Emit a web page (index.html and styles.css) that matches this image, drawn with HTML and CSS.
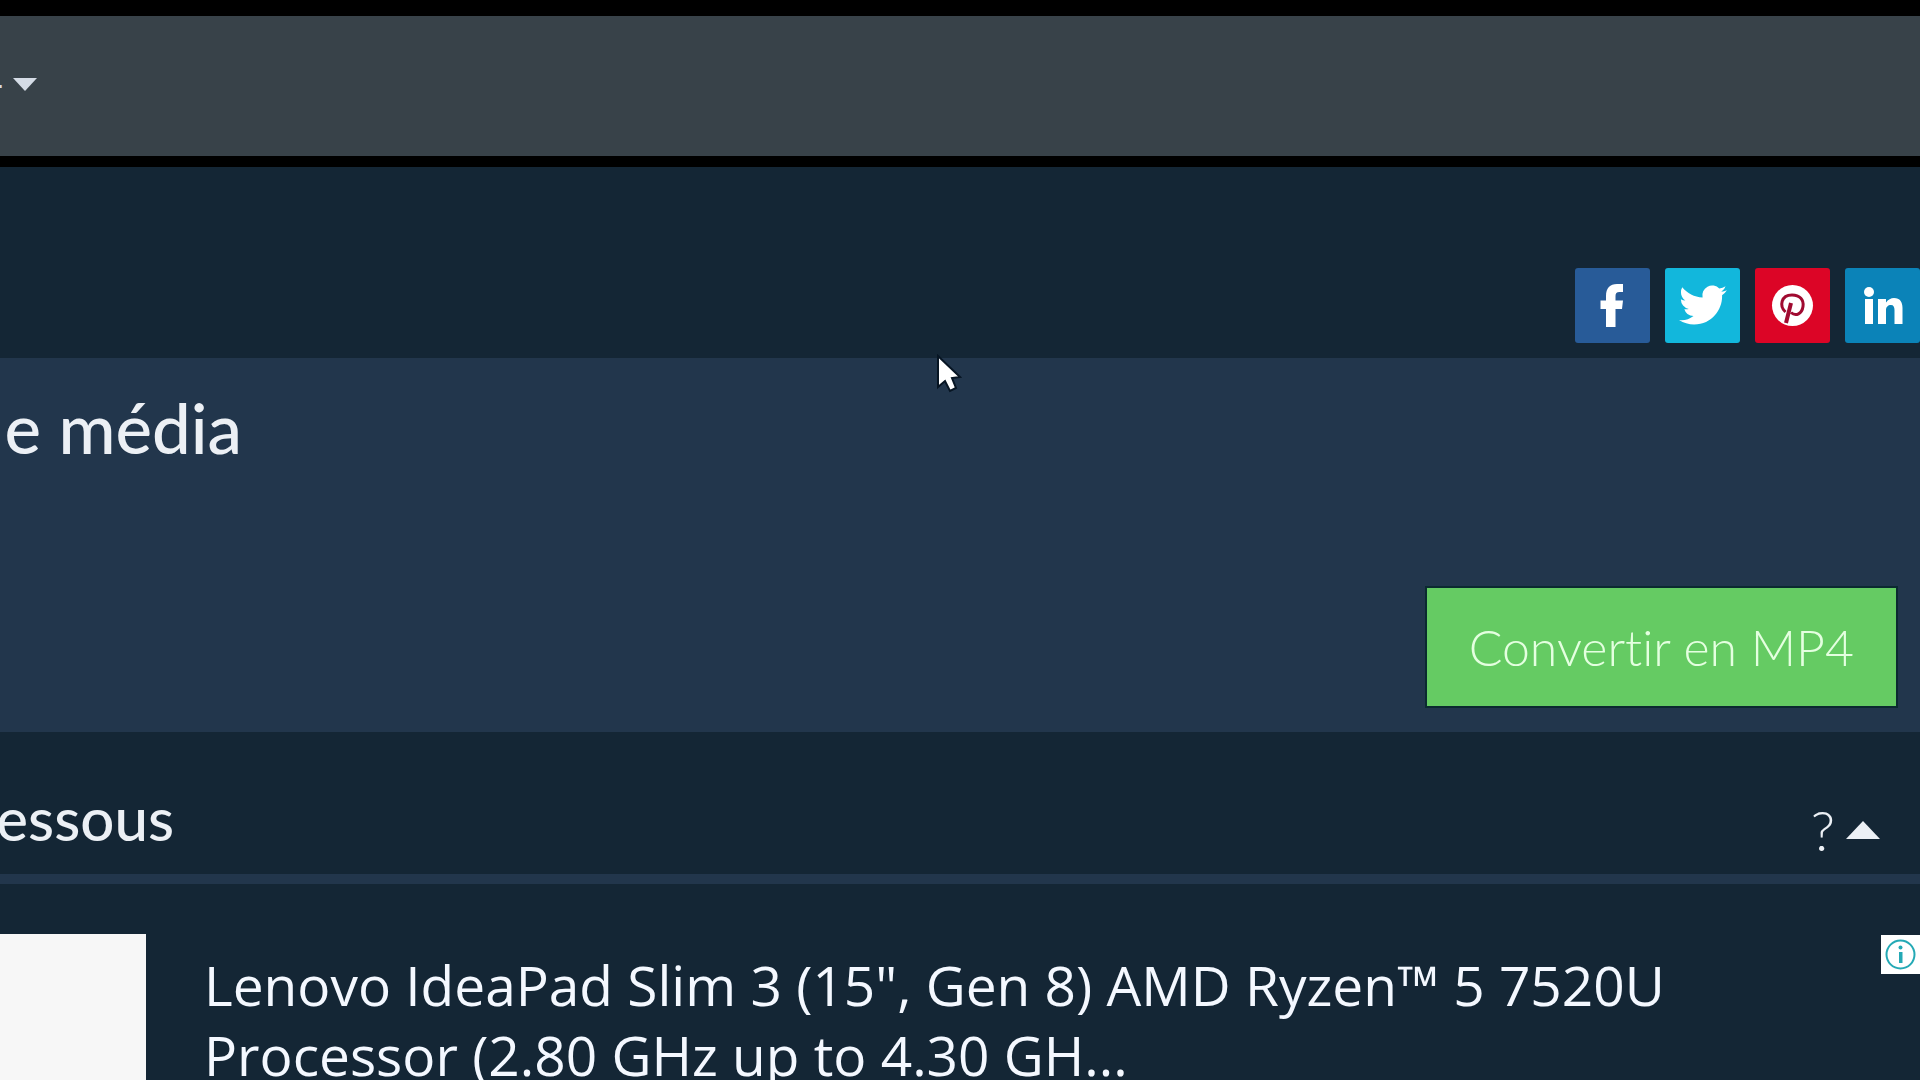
FILE: index.html
```
<!DOCTYPE html>
<html lang="fr">
<head>
    <meta charset="UTF-8">
    <meta name="viewport" content="width=device-width, initial-scale=1.0">
    <title>Convertir en MP4</title>
    <link rel="stylesheet" href="styles.css">
</head>
<body>
    <header class="topbar">
        <button class="topbar__menu" aria-label="Menu">
            <span class="topbar__label">-</span>
            <span class="caret caret--down"></span>
        </button>
    </header>

    <nav class="share" aria-label="Partager">
        <a class="share__link share__link--facebook" href="#" aria-label="Facebook">
            <svg viewBox="0 0 75 75">
                <path d="M31 59V41H25.500V32.500H31V28C31 20 35 16 42 16H48V24H44.500C41.500 24 40.500 25.500 40.500 28V32.500H48L47 41H40.500V59Z" />
            </svg>
        </a>
        <a class="share__link share__link--twitter" href="#" aria-label="Twitter">
            <svg viewBox="0 0 75 75">
                <path transform="translate(14 13) scale(2)" d="M23.950 4.570a10 10 0 0 1-2.820.77 4.960 4.960 0 0 0 2.160-2.720c-.95.55-2 .96-3.130 1.180a4.920 4.920 0 0 0-8.380 4.480C7.690 8.090 4.070 6.130 1.640 3.160a4.820 4.820 0 0 0-.67 2.480c0 1.710.87 3.210 2.190 4.100a4.900 4.900 0 0 1-2.230-.62v.06a4.920 4.920 0 0 0 3.950 4.830 5 5 0 0 1-2.210.08 4.940 4.940 0 0 0 4.600 3.420A9.870 9.870 0 0 1 0 19.540a13.990 13.990 0 0 0 7.550 2.210c9.050 0 14-7.500 14-13.980 0-.21 0-.42-.02-.63a9.940 9.940 0 0 0 2.420-2.570z" />
            </svg>
        </a>
        <a class="share__link share__link--pinterest" href="#" aria-label="Pinterest">
            <svg viewBox="0 0 75 75">
                <circle cx="37.500" cy="37.500" r="20.500" />
                <path class="share__stroke" d="M30.500 44C24 38 26 27 37 27C45 27 49 32 48 38.500C47 45.500 41 49 36 44.500" />
                <path class="share__stem" d="M36 35L31 55" />
            </svg>
        </a>
        <a class="share__link share__link--linkedin" href="#" aria-label="LinkedIn">
            <svg viewBox="0 0 75 75">
                <circle cx="24" cy="24" r="5" />
                <path d="M20 31H28V56H20ZM33 31H41V34.500C43 31.500 46 30 49 30C55 30 57.500 34 57.500 40V56H49.500V42C49.500 39 48.500 37 46 37C43 37 41 39 41 42V56H33Z" />
            </svg>
        </a>
    </nav>

    <main>
        <section class="panel">
            <h1 class="panel__title">de média</h1>
            <button class="btn">Convertir en MP4</button>
        </section>

        <section class="step">
            <h2 class="step__title">essous</h2>
            <button class="step__help">? <span class="caret caret--up"></span></button>
        </section>

        <section class="ad">
            <div class="ad__image"></div>
            <a class="ad__text" href="#">Lenovo IdeaPad Slim 3 (15", Gen 8) AMD Ryzen™ 5 7520U Processor (2.80 GHz up to 4.30 GH...</a>
            <button class="ad__info" aria-label="Informations">
                <svg viewBox="0 0 39 39">
                    <circle class="ad__ring" cx="19.500" cy="19.500" r="14" />
                    <circle cx="19.500" cy="12.500" r="2" />
                    <path d="M18 17H21.500V28H18Z" />
                </svg>
            </button>
        </section>
    </main>

    <svg class="cursor" viewBox="0 0 26 40">
        <path d="M2 2V33L9 27L14 37L20 34L16 24L24 23Z" />
    </svg>
</body>
</html>
```

FILE: styles.css
```
* {
	border: 0;
	box-sizing: border-box;
	margin: 0;
	padding: 0;
}

:root {
	--bg: #142635;
	--panel: #22364c;
	--bar: #384249;
	--fg: #ecf0f5;
	--green: #65cb63;
}

body {
	display: flex;
	flex-direction: column;
	min-height: 100vh;
	background-color: var(--bg);
	color: var(--fg);
	font-family: Lato, sans-serif;
}

button {
	appearance: none;
	background: none;
	color: inherit;
	font-family: inherit;
	cursor: pointer;
}

svg {
	display: block;
	fill: #fff;
}

main {
	display: flex;
	flex: 1;
	flex-direction: column;
}

.topbar {
	display: flex;
	align-items: center;
	height: 167px;
	padding-bottom: 4px;
	background-color: var(--bar);
	border-top: 16px solid #000;
	border-bottom: 11px solid #000;
}

.topbar__menu {
	display: flex;
	align-items: center;
	gap: 9px;
	color: #d5dce6;
}

.topbar__label {
	display: flex;
	justify-content: flex-end;
	width: 4px;
	overflow: hidden;
	font-size: 40px;
	line-height: 40px;
}

.caret {
	border-left: 12px solid transparent;
	border-right: 12px solid transparent;
}

.caret--down {
	border-top: 13px solid #d5dce6;
}

.caret--up {
	border-left-width: 17px;
	border-right-width: 17px;
	border-bottom: 18px solid var(--fg);
}

.share {
	display: flex;
	justify-content: flex-end;
	gap: 15px;
	padding: 101px 0 15px;
}

.share__link {
	width: 75px;
	height: 75px;
	border-radius: 3px;
}

.share__link--facebook {
	background-color: #285b98;
}

.share__link--twitter {
	background-color: #12b7dc;
}

.share__link--pinterest {
	background-color: #dc0526;
}

.share__link--linkedin {
	background-color: #0b83b8;
}

.share__stroke,
.share__stem {
	fill: none;
	stroke: #a00a30;
	stroke-width: 3;
}

.share__stem {
	stroke-width: 4;
}

.panel {
	display: flex;
	flex-direction: column;
	justify-content: space-between;
	height: 374px;
	padding: 28px 24px 26px 0;
	background-color: var(--panel);
}

.panel__title {
	display: flex;
	justify-content: flex-end;
	width: 242px;
	overflow: hidden;
	font-size: 69px;
	font-weight: 500;
	line-height: 84px;
	white-space: nowrap;
}

.btn {
	align-self: flex-end;
	padding: 24px 42px;
	background-color: var(--green);
	box-shadow: 0 0 0 2px #0b2a30;
	color: #e4ffe0;
	font-size: 50px;
	font-variant-ligatures: none;
	font-weight: 300;
	line-height: 70px;
}

.step {
	display: flex;
	align-items: center;
	justify-content: space-between;
	height: 152px;
	padding: 30px 40px 0 0;
	border-bottom: 10px solid var(--panel);
}

.step__title {
	display: flex;
	justify-content: flex-end;
	width: 174px;
	overflow: hidden;
	font-size: 60px;
	font-weight: 500;
	line-height: 70px;
	white-space: nowrap;
}

.step__help {
	display: flex;
	align-items: center;
	gap: 11px;
	padding-top: 24px;
	font-size: 56px;
	font-weight: 300;
	line-height: 60px;
}

.ad {
	display: flex;
	flex: 1;
	align-items: flex-start;
	padding-top: 50px;
}

.ad__image {
	flex: none;
	align-self: stretch;
	width: 146px;
	background-color: #f7f7f7;
}

.ad__text {
	flex: 1;
	margin: 16px 0 -10px;
	padding: 0 180px 0 58px;
	color: #f4f8ff;
	font-family: "Open Sans", "Noto Sans", sans-serif;
	font-size: 55px;
	font-weight: 500;
	line-height: 70px;
	text-decoration: none;
}

.ad__info {
	flex: none;
	width: 39px;
	height: 39px;
	margin-top: 1px;
	background-color: #fff;
}

.ad__info svg {
	fill: #24a9b5;
}

.ad__info .ad__ring {
	fill: none;
	stroke: #24a9b5;
	stroke-width: 2;
}

.cursor {
	position: absolute;
	top: 354px;
	left: 936px;
	width: 26px;
	height: 40px;
	stroke: #071523;
	stroke-width: 2;
}
```
